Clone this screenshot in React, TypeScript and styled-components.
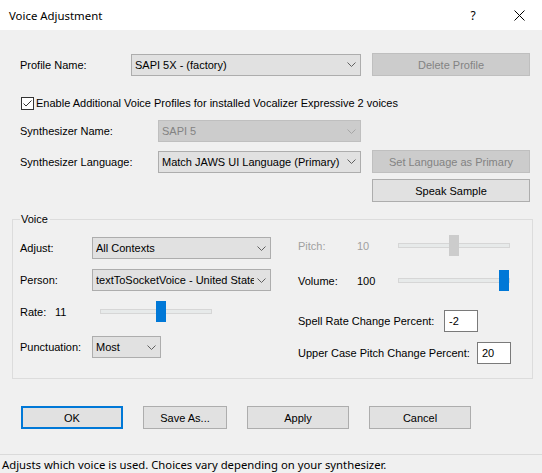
import React from 'react';
import styled, { createGlobalStyle } from 'styled-components';

const GlobalStyle = createGlobalStyle`
  html, body {
    margin: 0;
    padding: 0;
    background: #f0f0f0;
  }
  body {
    font-family: "Liberation Sans", Arial, sans-serif;
    font-size: 11px;
    color: #000;
  }
`

const Window = styled.div`
  width: 542px;
  height: 473px;
  display: flex;
  flex-direction: column;
  background: #f0f0f0;
  overflow: hidden;
`

const TitleBar = styled.div`
  height: 30px;
  flex: none;
  background: #fff;
  display: flex;
  align-items: center;
  padding-left: 9px;
  font-family: "Noto Sans", "Open Sans", sans-serif;
  font-size: 11.4px;
`

const Title = styled.div`
  flex: 1;
`

const CaptionButton = styled.div`
  width: 46px;
  height: 30px;
  display: flex;
  align-items: center;
  justify-content: center;
  font-size: 12px;
`

const Top = styled.div`
  padding: 23px 0 0 20px;
  display: flex;
  flex-direction: column;
`

const Row = styled.div<{ $top: number; $h?: number }>`
  display: flex;
  align-items: center;
  margin-top: ${p => p.$top}px;
  height: ${p => p.$h ?? 23}px;
`

const Label = styled.span<{ $w?: number; $dim?: boolean }>`
  flex: none;
  width: ${p => (p.$w ? `${p.$w}px` : 'auto')};
  color: ${p => (p.$dim ? '#a0a0a0' : '#000')};
  white-space: nowrap;
`

const ComboBox = styled.div<{ $w: number; $disabled?: boolean }>`
  flex: none;
  box-sizing: border-box;
  width: ${p => p.$w}px;
  height: 22px;
  border: 1px solid ${p => (p.$disabled ? '#bfbfbf' : '#adadad')};
  background: ${p => (p.$disabled ? '#cccccc' : '#e1e1e1')};
  color: ${p => (p.$disabled ? '#838383' : '#000')};
  display: flex;
  align-items: center;
  gap: 3px;
  padding: 0 4px 0 3px;
`

const ComboText = styled.span`
  flex: 1;
  overflow: hidden;
  white-space: nowrap;
`

const Button = styled.div<{ $w: number; $h?: number; $disabled?: boolean; $default?: boolean }>`
  flex: none;
  box-sizing: border-box;
  width: ${p => p.$w}px;
  height: ${p => p.$h ?? 23}px;
  border: ${p => (p.$default ? '2px solid #0078d7' : `1px solid ${p.$disabled ? '#bfbfbf' : '#adadad'}`)};
  background: ${p => (p.$disabled ? '#cccccc' : '#e1e1e1')};
  color: ${p => (p.$disabled ? '#838383' : '#000')};
  display: flex;
  align-items: center;
  justify-content: center;
  white-space: nowrap;
`

const Spacer = styled.div<{ $w: number }>`
  flex: none;
  width: ${p => p.$w}px;
`

const CheckRow = styled.label`
  display: flex;
  align-items: center;
  gap: 2px;
  margin-top: 19px;
  height: 16px;
  padding-left: 1px;
`

const Group = styled.fieldset`
  margin: 11px 9px 0 12px;
  padding: 9px 0 14px 7px;
  border: 1px solid #dcdcdc;
  display: flex;
  min-width: 0;
`

const Legend = styled.legend`
  padding: 0 2px 0 1px;
  margin-left: 0;
  line-height: 13px;
`

const Column = styled.div<{ $w?: number; $top?: number }>`
  display: flex;
  flex-direction: column;
  width: ${p => (p.$w ? `${p.$w}px` : 'auto')};
  padding-top: ${p => p.$top ?? 0}px;
`

const SliderWrap = styled.div<{ $w: number }>`
  position: relative;
  flex: none;
  width: ${p => p.$w}px;
  height: 21px;
  display: flex;
  align-items: center;
`

const Track = styled.div`
  width: 100%;
  height: 5px;
  box-sizing: border-box;
  border: 1px solid #d6d6d6;
  background: #e7eaea;
`

const Thumb = styled.div<{ $disabled?: boolean }>`
  position: absolute;
  top: 0;
  width: 10px;
  height: 21px;
  background: ${p => (p.$disabled ? '#cccccc' : '#0078d7')};
`

const NumberBox = styled.div`
  flex: none;
  box-sizing: border-box;
  width: 34px;
  height: 22px;
  background: #fff;
  border: 1px solid #7a7a7a;
  display: flex;
  align-items: center;
  padding-left: 4px;
`

const ButtonBar = styled.div`
  display: flex;
  gap: 20px;
  padding-left: 21px;
  margin-top: 27px;
`

const StatusBar = styled.div`
  margin-top: auto;
  height: 18px;
  border-top: 1px solid #dadada;
  display: flex;
  align-items: center;
  padding-left: 2px;
  font-family: "Noto Sans", "Open Sans", sans-serif;
  font-size: 11.3px;
`

const Chevron = ({ disabled }: { disabled?: boolean }) => (
  <svg width="9" height="5" viewBox="0 0 9 5">
    <path d="M0.5 0.5 L4.5 4.5 L8.5 0.5" fill="none" stroke={disabled ? '#a6a6a6' : '#606060'} strokeWidth="1" />
  </svg>
)

const Combo = ({ w, text, disabled }: { w: number; text: string; disabled?: boolean }) => (
  <ComboBox $w={w} $disabled={disabled}>
    <ComboText>{text}</ComboText>
    <Chevron disabled={disabled} />
  </ComboBox>
)

const Slider = ({ w, at, disabled }: { w: number; at: number; disabled?: boolean }) => (
  <SliderWrap $w={w}>
    <Track />
    <Thumb $disabled={disabled} style={{ left: at }} />
  </SliderWrap>
)

const CheckBox = () => (
  <svg width="13" height="13" viewBox="0 0 13 13">
    <rect x="0.5" y="0.5" width="12" height="12" fill="#fff" stroke="#333" />
    <path d="M2.5 6.5 L5 9 L10.5 3.5" fill="none" stroke="#333" strokeWidth="1" />
  </svg>
)

export default function App() {
  return (
    <Window>
      <GlobalStyle />
      <TitleBar>
        <Title>Voice Adjustment</Title>
        <CaptionButton>?</CaptionButton>
        <CaptionButton>
          <svg width="11" height="11" viewBox="0 0 11 11">
            <path d="M0.5 0.5 L10.5 10.5 M10.5 0.5 L0.5 10.5" stroke="#000" strokeWidth="1" />
          </svg>
        </CaptionButton>
      </TitleBar>

      <Top>
        <Row $top={0}>
          <Label $w={111}>Profile Name:</Label>
          <Combo w={230} text="SAPI 5X - (factory)" />
          <Spacer $w={11} />
          <Button $w={158} $disabled>Delete Profile</Button>
        </Row>
        <CheckRow>
          <CheckBox />
          <span>Enable Additional Voice Profiles for installed Vocalizer Expressive 2 voices</span>
        </CheckRow>
        <Row $top={9} $h={22}>
          <Label $w={138}>Synthesizer Name:</Label>
          <Combo w={203} text="SAPI 5" disabled />
        </Row>
        <Row $top={8}>
          <Label $w={138}>Synthesizer Language:</Label>
          <Combo w={203} text="Match JAWS UI Language (Primary)" />
          <Spacer $w={11} />
          <Button $w={158} $disabled>Set Language as Primary</Button>
        </Row>
        <Row $top={6}>
          <Spacer $w={352} />
          <Button $w={158}>Speak Sample</Button>
        </Row>
      </Top>

      <Group>
        <Legend>Voice</Legend>
        <Column $w={278} $top={2}>
          <Row $top={0} $h={22}>
            <Label $w={72}>Adjust:</Label>
            <Combo w={179} text="All Contexts" />
          </Row>
          <Row $top={10} $h={22}>
            <Label $w={72}>Person:</Label>
            <Combo w={179} text="textToSocketVoice - United States" />
          </Row>
          <Row $top={10} $h={21}>
            <Label $w={35}>Rate:</Label>
            <Label $w={45}>11</Label>
            <Slider w={112} at={56} />
          </Row>
          <Row $top={14} $h={22}>
            <Label $w={72}>Punctuation:</Label>
            <Combo w={69} text="Most" />
          </Row>
        </Column>
        <Column>
          <Row $top={0} $h={21}>
            <Label $w={59} $dim>Pitch:</Label>
            <Label $w={41} $dim>10</Label>
            <Slider w={112} at={51} disabled />
          </Row>
          <Row $top={14} $h={21}>
            <Label $w={59}>Volume:</Label>
            <Label $w={41}>100</Label>
            <Slider w={112} at={101} />
          </Row>
          <Row $top={19} $h={22}>
            <Label $w={146}>Spell Rate Change Percent:</Label>
            <NumberBox>-2</NumberBox>
          </Row>
          <Row $top={10} $h={22}>
            <Label $w={179}>Upper Case Pitch Change Percent:</Label>
            <NumberBox>20</NumberBox>
          </Row>
        </Column>
      </Group>

      <ButtonBar>
        <Button $w={102} $default>OK</Button>
        <Button $w={84}>Save As...</Button>
        <Button $w={102}>Apply</Button>
        <Button $w={102}>Cancel</Button>
      </ButtonBar>

      <StatusBar>Adjusts which voice is used. Choices vary depending on your synthesizer.</StatusBar>
    </Window>
  )
}
